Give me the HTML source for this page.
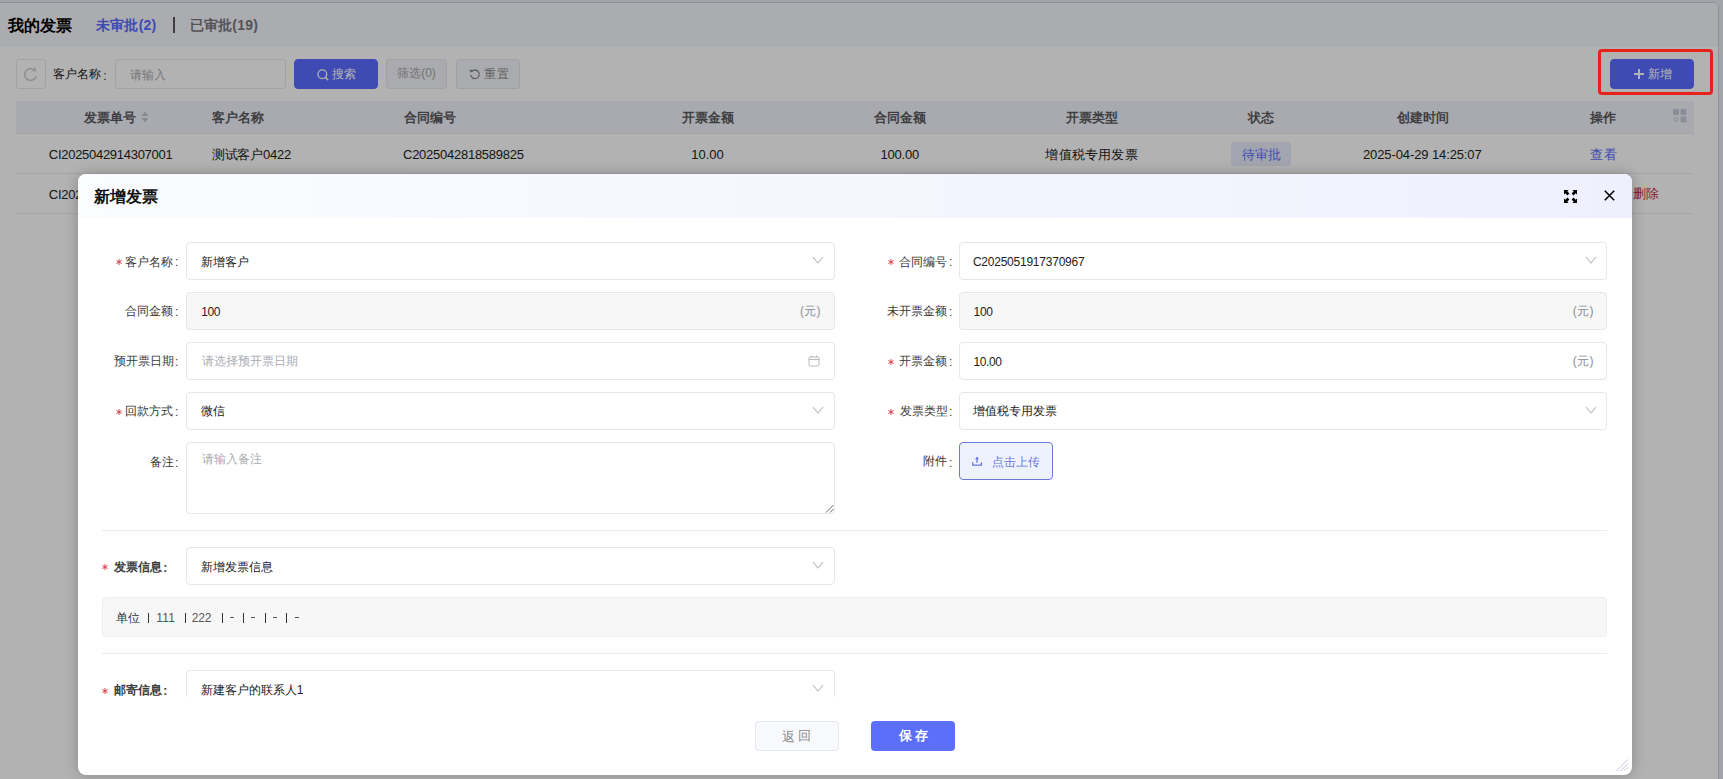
<!DOCTYPE html>
<html><head><meta charset="utf-8">
<style>
*{box-sizing:border-box;margin:0;padding:0}
html,body{width:1723px;height:779px;overflow:hidden}
body{position:relative;background:#eaebf3;font-family:"Liberation Sans",sans-serif;font-size:12px;color:#333}
.abs{position:absolute}
.t{position:absolute;white-space:nowrap;line-height:1}
.page{position:absolute;left:-10px;top:2px;width:1729px;height:800px;border:1px solid #cbced8;border-radius:6px;background:#fff;overflow:hidden}
.topbar{position:absolute;left:0;top:0;width:100%;height:44px;background:#f5f6fd}
.btn{position:absolute;border:1px solid #e8e9ee;border-radius:3px;background:#f4f5f9}
.th{position:absolute;top:101px;height:33px;background:#f2f4fb;left:16px;width:1678px;border-bottom:1px solid #e6e8ef}
.row{position:absolute;left:16px;width:1677px;height:1px;background:#ebedf2}
.mask{position:absolute;left:0;top:0;width:1723px;height:779px;background:rgba(0,0,0,.3)}
.modal{position:absolute;left:78px;top:174px;width:1554px;height:601px;background:#fff;border-radius:8px;overflow:hidden;box-shadow:0 0 14px rgba(0,0,0,.24)}
.mh{position:absolute;left:0;top:0;width:100%;height:44px;background:linear-gradient(90deg,#fbfcff,#eef1fd)}
.body{position:absolute;left:0;top:44px;width:1554px;height:479px;overflow:hidden}
.inp{position:absolute;border:1px solid #e4e6eb;border-radius:4px;background:#fff}
.inp.dis{background:#f7f7f8}
.chev{position:absolute}
.star{position:absolute}
.sep{position:absolute;width:1px;height:10px;background:#333}
.dash{position:absolute;width:4px;height:1px;background:#555}

</style></head><body>
<div class="page"><div class="topbar"></div></div>
<div class="abs" style="left:173px;top:17px;width:2px;height:15.5px;background:#5a5a5a"></div>
<!-- toolbar -->
<div class="btn" style="left:16px;top:59px;width:30px;height:30px;background:#fff"></div>
<svg class="abs" width="16" height="16" viewBox="0 0 16 16" style="left:23px;top:66px"><path d="M13.2 10.2A5.9 5.9 0 1 1 9.6 3" fill="none" stroke="#d2d2d2" stroke-width="1.7"/><path d="M11.3 0.9L13.9 5.3 8.6 5.2z" fill="#d2d2d2"/></svg>
<div class="btn" style="left:115px;top:59px;width:171px;height:30px;background:#fff"></div>
<div class="btn" style="left:294px;top:59px;width:84px;height:30px;background:#5b6cff;border-color:#5b6cff;border-radius:4px"></div>
<svg class="abs" width="12" height="12" viewBox="0 0 12 12" style="left:317px;top:69px"><circle cx="5.3" cy="5.3" r="4.4" fill="none" stroke="#fff" stroke-width="1.3"/><path d="M8.4 8.4L10.8 10.8" stroke="#fff" stroke-width="1.5" stroke-linecap="round"/></svg>
<div class="btn" style="left:386px;top:59px;width:61px;height:30px"></div>
<div class="btn" style="left:456px;top:59px;width:64px;height:30px"></div>
<svg class="abs" width="12" height="12" viewBox="0 0 12 12" style="left:469px;top:68px"><path d="M2.6 3.6A4.3 4.3 0 1 1 1.7 7" fill="none" stroke="#8a8a8a" stroke-width="1.3"/><path d="M0.6 1.6L4.4 2.2 1.6 4.8z" fill="#8a8a8a"/></svg>
<div class="btn" style="left:1610px;top:59px;width:84px;height:30px;background:#5b6cff;border-color:#5b6cff;border-radius:4px"></div>
<div class="abs" style="left:1634px;top:73.25px;width:10px;height:1.5px;background:#fff"></div>
<div class="abs" style="left:1638.25px;top:69px;width:1.5px;height:10px;background:#fff"></div>
<!-- table -->
<div class="th"></div>
<svg class="abs" width="8" height="12" viewBox="0 0 8 12" style="left:141px;top:111px"><path d="M4 0.5L7.5 5H0.5z M4 11.5L7.5 7H0.5z" fill="#c4c6cc"/></svg>
<svg class="abs" width="14" height="14" viewBox="0 0 14 14" style="left:1672.5px;top:108.5px"><rect x="0" y="0" width="6" height="6" rx="1" fill="#c8ccda"/><rect x="7.5" y="0" width="6" height="6" rx="1" fill="#c8ccda"/><rect x="7.5" y="7.5" width="6" height="6" rx="1" fill="#c8ccda"/><circle cx="3" cy="10.5" r="2" fill="none" stroke="#c8ccda" stroke-width="1"/></svg>
<div class="row" style="top:173px"></div>
<div class="row" style="top:213px"></div>
<div class="abs" style="left:1231px;top:142px;width:60px;height:23.5px;background:#e8ecfb;border-radius:3px"></div>
<div class="t" style="left:8.00px;top:17.75px;font-size:16px;color:#000;font-weight:bold;">我的发票</div>
<div class="t" style="left:96.10px;top:17.90px;font-size:14px;color:#5b6cff;font-weight:bold;letter-spacing:0.180px;">未审批(2)</div>
<div class="t" style="left:189.50px;top:17.90px;font-size:14px;color:#78787e;font-weight:bold;letter-spacing:0.250px;">已审批(19)</div>
<div class="t" style="left:52.80px;top:68.40px;font-size:12px;color:#222;">客户名称</div>
<div class="t" style="left:103.30px;top:69.50px;font-size:12px;color:#222;">:</div>
<div class="t" style="left:130.00px;top:68.60px;font-size:12px;color:#a8abb2;letter-spacing:-0.100px;">请输入</div>
<div class="t" style="left:332.00px;top:67.75px;font-size:12px;color:#fff;letter-spacing:0.200px;">搜索</div>
<div class="t" style="left:397.30px;top:67.35px;font-size:12px;color:#a4a4a4;letter-spacing:-0.050px;">筛选(0)</div>
<div class="t" style="left:483.90px;top:68.25px;font-size:12px;color:#8a8a8a;letter-spacing:1.000px;">重置</div>
<div class="t" style="left:1647.90px;top:67.60px;font-size:12px;color:#fff;letter-spacing:-0.100px;">新增</div>
<div class="t" style="left:83.70px;top:110.50px;font-size:13px;color:#5a5a5e;font-weight:bold;">发票单号</div>
<div class="t" style="left:212.00px;top:110.50px;font-size:13px;color:#5a5a5e;font-weight:bold;">客户名称</div>
<div class="t" style="left:404.00px;top:110.50px;font-size:13px;color:#5a5a5e;font-weight:bold;">合同编号</div>
<div class="t" style="left:682.00px;top:110.50px;font-size:13px;color:#5a5a5e;font-weight:bold;">开票金额</div>
<div class="t" style="left:873.60px;top:110.50px;font-size:13px;color:#5a5a5e;font-weight:bold;">合同金额</div>
<div class="t" style="left:1066.00px;top:110.50px;font-size:13px;color:#5a5a5e;font-weight:bold;">开票类型</div>
<div class="t" style="left:1247.90px;top:110.50px;font-size:13px;color:#5a5a5e;font-weight:bold;">状态</div>
<div class="t" style="left:1396.90px;top:110.50px;font-size:13px;color:#5a5a5e;font-weight:bold;">创建时间</div>
<div class="t" style="left:1589.90px;top:110.50px;font-size:13px;color:#5a5a5e;font-weight:bold;">操作</div>
<div class="t" style="left:48.80px;top:147.80px;font-size:13px;color:#222;letter-spacing:-0.282px;">CI2025042914307001</div>
<div class="t" style="left:212.00px;top:147.80px;font-size:13px;color:#222;letter-spacing:-0.257px;">测试客户0422</div>
<div class="t" style="left:403.00px;top:147.80px;font-size:13px;color:#222;letter-spacing:-0.256px;">C2025042818589825</div>
<div class="t" style="left:691.20px;top:147.90px;font-size:13px;color:#222;letter-spacing:0.025px;">10.00</div>
<div class="t" style="left:880.40px;top:147.90px;font-size:13px;color:#222;letter-spacing:-0.160px;">100.00</div>
<div class="t" style="left:1045.30px;top:147.80px;font-size:13px;color:#222;letter-spacing:0.233px;">增值税专用发票</div>
<div class="t" style="left:1241.70px;top:147.80px;font-size:13px;color:#5b6cff;letter-spacing:0.100px;">待审批</div>
<div class="t" style="left:1363.00px;top:148.00px;font-size:13px;color:#222;letter-spacing:-0.111px;">2025-04-29 14:25:07</div>
<div class="t" style="left:1590.00px;top:147.90px;font-size:13px;color:#5b6cff;letter-spacing:0.500px;">查看</div>
<div class="t" style="left:48.80px;top:188.20px;font-size:13px;color:#222;letter-spacing:-0.282px;">CI2025042914307002</div>
<div class="t" style="left:1632.50px;top:187.35px;font-size:13px;color:#c42a45;">删除</div>
<div class="mask"></div>
<!-- modal -->
<div class="modal">
<div class="mh"></div>
<svg class="abs" width="14" height="14" viewBox="0 0 14 14" style="left:1486px;top:16px"><g fill="#000"><path d="M0 0H4.6L3.3 1.3 5.4 3.4 3.4 5.4 1.3 3.3 0 4.6z"/><path d="M13 0H8.4L9.7 1.3 7.6 3.4 9.6 5.4 11.7 3.3 13 4.6z"/><path d="M0 13H4.6L3.3 11.7 5.4 9.6 3.4 7.6 1.3 9.7 0 8.4z"/><path d="M13 13H8.4L9.7 11.7 7.6 9.6 9.6 7.6 11.7 9.7 13 8.4z"/></g></svg>
<svg class="abs" width="12" height="12" viewBox="0 0 12 12" style="left:1525.5px;top:16px"><path d="M0.8 0.8L10.2 10.2M10.2 0.8L0.8 10.2" stroke="#000" stroke-width="1.55"/></svg>
<div class="body">
<!-- inputs: body coords = page - (78,218) -->
<div class="inp" style="left:108px;top:24px;width:649px;height:38px"></div>
<div class="inp dis" style="left:108px;top:74px;width:649px;height:38px"></div>
<div class="inp" style="left:108px;top:124px;width:649px;height:38px"></div>
<div class="inp" style="left:108px;top:174px;width:649px;height:38px"></div>
<div class="inp" style="left:108px;top:224px;width:649px;height:72px"></div>
<div class="inp" style="left:881px;top:24px;width:648px;height:38px"></div>
<div class="inp dis" style="left:881px;top:74px;width:648px;height:38px"></div>
<div class="inp" style="left:881px;top:124px;width:648px;height:38px"></div>
<div class="inp" style="left:881px;top:174px;width:648px;height:38px"></div>
<div class="abs" style="left:881px;top:224px;width:94px;height:37.5px;border:1px solid #6a79dc;border-radius:4px;background:#eef2fd"></div>
<svg class="abs" width="12" height="12" viewBox="0 0 12 12" style="left:893px;top:237px"><path d="M6 2.2V7.7" stroke="#6a7ae0" stroke-width="1.3"/><path d="M4 4.2L6 1.8 8 4.2z" fill="#6a7ae0"/><path d="M1.7 7.2V10.1H10.4V7.2" fill="none" stroke="#6a7ae0" stroke-width="1.3"/></svg>
<svg class="abs" width="9" height="9" viewBox="0 0 9 9" style="left:747px;top:286px"><path d="M8.5 1L1 8.5M8.5 5L5 8.5" stroke="#666" stroke-width="1"/></svg>
<svg class="abs" width="12" height="12" viewBox="0 0 12 12" style="left:730px;top:137px"><rect x="1" y="2" width="10" height="9" rx="1" fill="none" stroke="#b8babf" stroke-width="1"/><path d="M1 4.5H11M3.5 0.5V2.5M8.5 0.5V2.5" stroke="#b8babf" stroke-width="1"/></svg>
<div class="abs" style="left:24px;top:312px;width:1505px;height:1px;background:#ebecf0"></div>
<div class="inp" style="left:108px;top:329px;width:649px;height:38px"></div>
<div class="abs" style="left:24px;top:379px;width:1505px;height:40px;border:1px solid #eceef2;border-radius:4px;background:#f7f7f8"></div>
<div class="abs" style="left:24px;top:435px;width:1505px;height:1px;background:#ebecf0"></div>
<div class="inp" style="left:108px;top:452px;width:649px;height:38px"></div>
<svg class="chev" width="12" height="9" viewBox="0 0 12 9" style="left:734px;top:38px"><path d="M1 1L6 7 11 1" fill="none" stroke="#b8b8b8" stroke-width="1.1"/></svg>
<svg class="chev" width="12" height="9" viewBox="0 0 12 9" style="left:734px;top:188px"><path d="M1 1L6 7 11 1" fill="none" stroke="#b8b8b8" stroke-width="1.1"/></svg>
<svg class="chev" width="12" height="9" viewBox="0 0 12 9" style="left:1507px;top:38px"><path d="M1 1L6 7 11 1" fill="none" stroke="#b8b8b8" stroke-width="1.1"/></svg>
<svg class="chev" width="12" height="9" viewBox="0 0 12 9" style="left:1507px;top:188px"><path d="M1 1L6 7 11 1" fill="none" stroke="#b8b8b8" stroke-width="1.1"/></svg>
<svg class="chev" width="12" height="9" viewBox="0 0 12 9" style="left:734px;top:343px"><path d="M1 1L6 7 11 1" fill="none" stroke="#b8b8b8" stroke-width="1.1"/></svg>
<svg class="chev" width="12" height="9" viewBox="0 0 12 9" style="left:734px;top:466px"><path d="M1 1L6 7 11 1" fill="none" stroke="#b8b8b8" stroke-width="1.1"/></svg>
<svg class="star" width="6" height="6" viewBox="0 0 6 6" style="left:38px;top:41px"><path d="M3 0V6M0.4 1.5L5.6 4.5M0.4 4.5L5.6 1.5" stroke="#d8404f" stroke-width="1"/></svg>
<svg class="star" width="6" height="6" viewBox="0 0 6 6" style="left:38px;top:191px"><path d="M3 0V6M0.4 1.5L5.6 4.5M0.4 4.5L5.6 1.5" stroke="#d8404f" stroke-width="1"/></svg>
<svg class="star" width="6" height="6" viewBox="0 0 6 6" style="left:810px;top:41px"><path d="M3 0V6M0.4 1.5L5.6 4.5M0.4 4.5L5.6 1.5" stroke="#d8404f" stroke-width="1"/></svg>
<svg class="star" width="6" height="6" viewBox="0 0 6 6" style="left:810px;top:141px"><path d="M3 0V6M0.4 1.5L5.6 4.5M0.4 4.5L5.6 1.5" stroke="#d8404f" stroke-width="1"/></svg>
<svg class="star" width="6" height="6" viewBox="0 0 6 6" style="left:810px;top:191px"><path d="M3 0V6M0.4 1.5L5.6 4.5M0.4 4.5L5.6 1.5" stroke="#d8404f" stroke-width="1"/></svg>
<svg class="star" width="6" height="6" viewBox="0 0 6 6" style="left:24px;top:346px"><path d="M3 0V6M0.4 1.5L5.6 4.5M0.4 4.5L5.6 1.5" stroke="#d8404f" stroke-width="1"/></svg>
<svg class="star" width="6" height="6" viewBox="0 0 6 6" style="left:24px;top:470px"><path d="M3 0V6M0.4 1.5L5.6 4.5M0.4 4.5L5.6 1.5" stroke="#d8404f" stroke-width="1"/></svg>
<div class="sep" style="left:70px;top:395px;height:10px;width:1px"></div>
<div class="sep" style="left:107px;top:395px;height:10px;width:1px"></div>
<div class="sep" style="left:144px;top:395px;height:10px;width:1px"></div>
<div class="sep" style="left:165px;top:395px;height:10px;width:1px"></div>
<div class="sep" style="left:187px;top:395px;height:10px;width:1px"></div>
<div class="sep" style="left:208px;top:395px;height:10px;width:1px"></div>
<div class="dash" style="left:152px;top:399px"></div>
<div class="dash" style="left:173px;top:399px"></div>
<div class="dash" style="left:195px;top:399px"></div>
<div class="dash" style="left:217px;top:399px"></div>
<div class="t" style="left:46.60px;top:37.50px;font-size:12px;color:#3a3a3a;">客户名称</div>
<div class="t" style="left:96.90px;top:38.25px;font-size:12px;color:#3a3a3a;">:</div>
<div class="t" style="left:46.60px;top:87.40px;font-size:12px;color:#3a3a3a;">合同金额</div>
<div class="t" style="left:96.90px;top:88.15px;font-size:12px;color:#3a3a3a;">:</div>
<div class="t" style="left:35.60px;top:137.20px;font-size:12px;color:#3a3a3a;">预开票日期</div>
<div class="t" style="left:96.90px;top:137.95px;font-size:12px;color:#3a3a3a;">:</div>
<div class="t" style="left:46.60px;top:187.40px;font-size:12px;color:#3a3a3a;">回款方式</div>
<div class="t" style="left:96.90px;top:188.15px;font-size:12px;color:#3a3a3a;">:</div>
<div class="t" style="left:71.60px;top:238.30px;font-size:12px;color:#3a3a3a;">备注</div>
<div class="t" style="left:96.90px;top:238.55px;font-size:12px;color:#3a3a3a;">:</div>
<div class="t" style="left:820.60px;top:37.50px;font-size:12px;color:#3a3a3a;">合同编号</div>
<div class="t" style="left:870.90px;top:38.25px;font-size:12px;color:#3a3a3a;">:</div>
<div class="t" style="left:808.60px;top:87.40px;font-size:12px;color:#3a3a3a;">未开票金额</div>
<div class="t" style="left:870.90px;top:88.15px;font-size:12px;color:#3a3a3a;">:</div>
<div class="t" style="left:820.60px;top:137.20px;font-size:12px;color:#3a3a3a;">开票金额</div>
<div class="t" style="left:870.90px;top:137.95px;font-size:12px;color:#3a3a3a;">:</div>
<div class="t" style="left:821.60px;top:187.40px;font-size:12px;color:#3a3a3a;">发票类型</div>
<div class="t" style="left:870.90px;top:188.15px;font-size:12px;color:#3a3a3a;">:</div>
<div class="t" style="left:844.60px;top:237.30px;font-size:12px;color:#3a3a3a;">附件</div>
<div class="t" style="left:870.90px;top:238.55px;font-size:12px;color:#3a3a3a;">:</div>
<div class="t" style="left:36.00px;top:343.00px;font-size:12px;color:#3a3a3a;font-weight:bold;">发票信息</div>
<div class="t" style="left:85.30px;top:343.75px;font-size:12px;color:#3a3a3a;font-weight:bold;">:</div>
<div class="t" style="left:36.00px;top:466.00px;font-size:12px;color:#3a3a3a;font-weight:bold;">邮寄信息</div>
<div class="t" style="left:85.30px;top:466.75px;font-size:12px;color:#3a3a3a;font-weight:bold;">:</div>
<div class="t" style="left:122.90px;top:37.65px;font-size:12px;color:#222;">新增客户</div>
<div class="t" style="left:123.20px;top:88.10px;font-size:12px;color:#222;letter-spacing:-0.450px;">100</div>
<div class="t" style="left:123.50px;top:137.20px;font-size:12px;color:#a8abb2;">请选择预开票日期</div>
<div class="t" style="left:123.20px;top:186.90px;font-size:12px;color:#222;">微信</div>
<div class="t" style="left:123.50px;top:235.00px;font-size:12px;color:#a8abb2;">请输入备注</div>
<div class="t" style="left:894.90px;top:38.20px;font-size:12px;color:#222;letter-spacing:-0.231px;">C2025051917370967</div>
<div class="t" style="left:895.60px;top:88.10px;font-size:12px;color:#222;letter-spacing:-0.300px;">100</div>
<div class="t" style="left:895.60px;top:137.65px;font-size:12px;color:#222;letter-spacing:-0.450px;">10.00</div>
<div class="t" style="left:895.20px;top:187.40px;font-size:12px;color:#222;">增值税专用发票</div>
<div class="t" style="left:914.20px;top:237.65px;font-size:12px;color:#6a7ae0;">点击上传</div>
<div class="t" style="left:123.00px;top:343.00px;font-size:12px;color:#222;">新增发票信息</div>
<div class="t" style="left:123.20px;top:466.00px;font-size:12px;color:#222;letter-spacing:-0.050px;">新建客户的联系人1</div>
<div class="t" style="left:722.00px;top:87.20px;font-size:12px;color:#8a8d93;letter-spacing:0.300px;">(元)</div>
<div class="t" style="left:1494.70px;top:87.20px;font-size:12px;color:#8a8d93;letter-spacing:0.350px;">(元)</div>
<div class="t" style="left:1494.70px;top:137.20px;font-size:12px;color:#8a8d93;letter-spacing:0.350px;">(元)</div>
<div class="t" style="left:37.50px;top:393.65px;font-size:12px;color:#333;">单位</div>
<div class="t" style="left:78.30px;top:393.90px;font-size:12px;color:#555;letter-spacing:0.150px;">111</div>
<div class="t" style="left:113.80px;top:393.90px;font-size:12px;color:#555;letter-spacing:-0.150px;">222</div>
</div>
<div class="abs" style="left:677px;top:547px;width:84px;height:29.5px;border:1px solid #e6e8ee;border-radius:4px;background:#f8f9fd"></div>
<div class="abs" style="left:793px;top:547px;width:84px;height:30px;border-radius:4px;background:#5b6ffb"></div>
<svg class="abs" width="14" height="14" viewBox="0 0 14 14" style="left:1537px;top:584px"><path d="M13 1.5L1.5 13M13 5.5L5.5 13M13 9.5L9.5 13" stroke="#c4c4d8" stroke-width="1"/></svg>
<div class="t" style="left:16.40px;top:15.25px;font-size:16px;color:#111;font-weight:bold;">新增发票</div>
<div class="t" style="left:704.00px;top:555.70px;font-size:13px;color:#8a8a8a;">返</div>
<div class="t" style="left:719.50px;top:555.20px;font-size:13px;color:#8a8a8a;">回</div>
<div class="t" style="left:821.10px;top:554.70px;font-size:13px;color:#fff;font-weight:bold;">保</div>
<div class="t" style="left:836.80px;top:555.20px;font-size:13px;color:#fff;font-weight:bold;">存</div>
</div>
<div class="abs" style="left:1597.5px;top:48.5px;width:115px;height:46px;border:3px solid #e8221a;border-radius:4px"></div>
</body></html>
